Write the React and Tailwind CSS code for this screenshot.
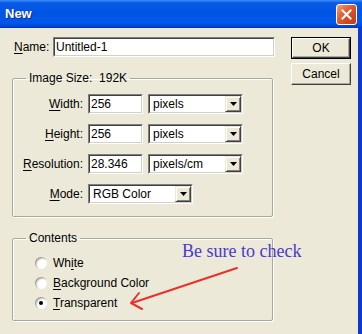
import React from "react";

function Sunken({ className, children }) {
  return (
    <div className={"h-[20px] border border-t-[#808080] border-l-[#808080] border-b-white border-r-white " + className}>
      <div className="h-full border border-t-[#404040] border-l-[#404040] border-b-[#d4d0c8] border-r-[#d4d0c8] bg-white flex items-center">
        {children}
      </div>
    </div>
  );
}

function Select({ className, value }) {
  return (
    <Sunken className={className}>
      <span className="flex-1 pl-[3px] leading-[16px] whitespace-nowrap">{value}</span>
      <div className="w-[16px] h-[16px] border border-t-[#ece9d8] border-l-[#ece9d8] border-b-[#404040] border-r-[#404040] bg-[#ece9d8] shadow-[inset_1px_1px_0_#fff,inset_-1px_-1px_0_#808080] flex items-center justify-center">
        <svg width="7" height="4" viewBox="0 0 7 4">
          <path d="M0 0 H7 L3.5 4 Z" fill="#000" />
        </svg>
      </div>
    </Sunken>
  );
}

function Row({ u, rest, children }) {
  return (
    <div className="h-[20px] flex items-center gap-[5px]">
      <span className="w-[70px] text-right whitespace-nowrap">
        <span className="underline underline-offset-2">{u}</span>
        {rest}
      </span>
      {children}
    </div>
  );
}

function Radio({ checked, pre, u, post }) {
  return (
    <div className="h-[20px] flex items-center gap-[6px]">
      <div className="w-[12px] h-[12px] rounded-full bg-white shadow-[inset_1px_1px_0_#a0a0a0,inset_2px_2px_1px_#d8d6cc] flex items-center justify-center">
        {checked && <div className="w-[4px] h-[4px] rounded-full bg-black" />}
      </div>
      <span className="whitespace-nowrap">
        {pre}
        <span className="underline underline-offset-2">{u}</span>
        {post}
      </span>
    </div>
  );
}

export default function App() {
  return (
    <div className="w-[362px] h-[334px] overflow-hidden relative flex flex-col bg-[#ece9d8] text-[12px] leading-[14px] text-black font-['Liberation_Sans',Arial,sans-serif]">
      {/* title bar */}
      <div className="h-[28px] shrink-0 flex items-center justify-between pl-[5px] pr-[5px] bg-[linear-gradient(180deg,#3d8ff5_0%,#0a5ae8_10%,#0054e3_45%,#0058ea_80%,#0047d6_93%,#0035b8_100%)]">
        <span className="text-white font-bold text-[13px] [text-shadow:1px_1px_0_#0a2a8a]">New</span>
        <div className="w-[21px] h-[21px] rounded-[3px] border border-white bg-[linear-gradient(135deg,#f2a27f_0%,#e2663c_35%,#d0461c_70%,#c2401a_100%)] flex items-center justify-center">
          <svg width="11" height="11" viewBox="0 0 11 11">
            <path d="M1.5 1.5 L9.5 9.5 M9.5 1.5 L1.5 9.5" stroke="#fff" strokeWidth="2" strokeLinecap="square" />
          </svg>
        </div>
      </div>

      {/* body */}
      <div className="flex-1 flex border-r-4 border-[#0a3ad4] pl-[12px] pt-[9px]">
        <div className="w-[263px] flex flex-col">
          {/* name row */}
          <div className="h-[20px] flex items-center">
            <span className="w-[41px] pl-[2px] whitespace-nowrap">
              <span className="underline underline-offset-2">N</span>ame:
            </span>
            <Sunken className="flex-1">
              <span className="pl-[1px] leading-[16px]">Untitled-1</span>
            </Sunken>
          </div>

          {/* image size */}
          <fieldset className="mt-[14px] w-[261px] border border-[#aca899] rounded-[2px] shadow-[1px_1px_0_#fff,inset_1px_1px_0_#fff]">
            <legend className="ml-[13px] px-[3px] leading-[14px] whitespace-nowrap">Image Size:&nbsp; 192K</legend>
            <div className="pt-[9px] pb-[12px] flex flex-col gap-[10px]">
              <Row u="W" rest="idth:">
                <Sunken className="w-[55px]">
                  <span className="pl-[1px] leading-[16px]">256</span>
                </Sunken>
                <Select className="w-[95px]" value="pixels" />
              </Row>
              <Row u="H" rest="eight:">
                <Sunken className="w-[55px]">
                  <span className="pl-[1px] leading-[16px]">256</span>
                </Sunken>
                <Select className="w-[95px]" value="pixels" />
              </Row>
              <Row u="R" rest="esolution:">
                <Sunken className="w-[55px]">
                  <span className="pl-[1px] leading-[16px]">28.346</span>
                </Sunken>
                <Select className="w-[95px]" value="pixels/cm" />
              </Row>
              <Row u="M" rest="ode:">
                <Select className="w-[105px]" value="RGB Color" />
              </Row>
            </div>
          </fieldset>

          {/* contents */}
          <fieldset className="mt-[14px] w-[261px] border border-[#aca899] rounded-[2px] shadow-[1px_1px_0_#fff,inset_1px_1px_0_#fff]">
            <legend className="ml-[13px] px-[3px] leading-[14px] whitespace-nowrap">Contents</legend>
            <div className="pt-[8px] pb-[7px] pl-[22px] flex flex-col">
              <Radio pre="Wh" u="i" post="te" />
              <Radio pre="" u="B" post="ackground Color" />
              <Radio checked pre="" u="T" post="ransparent" />
            </div>
          </fieldset>
        </div>

        {/* buttons */}
        <div className="ml-[16px] w-[60px] flex flex-col gap-[4px]">
          <div className="h-[22px] border border-black">
            <div className="h-full border border-t-white border-l-white border-b-[#404040] border-r-[#404040] shadow-[inset_-1px_-1px_0_#aca899] flex items-center justify-center">
              OK
            </div>
          </div>
          <div className="h-[22px] border border-t-white border-l-white border-b-[#404040] border-r-[#404040] shadow-[inset_-1px_-1px_0_#aca899] flex items-center justify-center">
            Cancel
          </div>
        </div>
      </div>

      {/* annotation */}
      <div className="absolute left-[182px] top-[240px] text-[18px] leading-[22px] text-[#4a3ad0] font-['Liberation_Serif','Times_New_Roman',serif] whitespace-nowrap">
        Be sure to check
      </div>
      <svg className="absolute left-0 top-0 pointer-events-none" width="362" height="334" viewBox="0 0 362 334">
        <g stroke="#e8302a" strokeWidth="2" fill="none" strokeLinecap="round" strokeLinejoin="round">
          <path d="M237 268 L132 303" />
          <path d="M139 293 L131 303 L142 309" />
        </g>
      </svg>
    </div>
  );
}
